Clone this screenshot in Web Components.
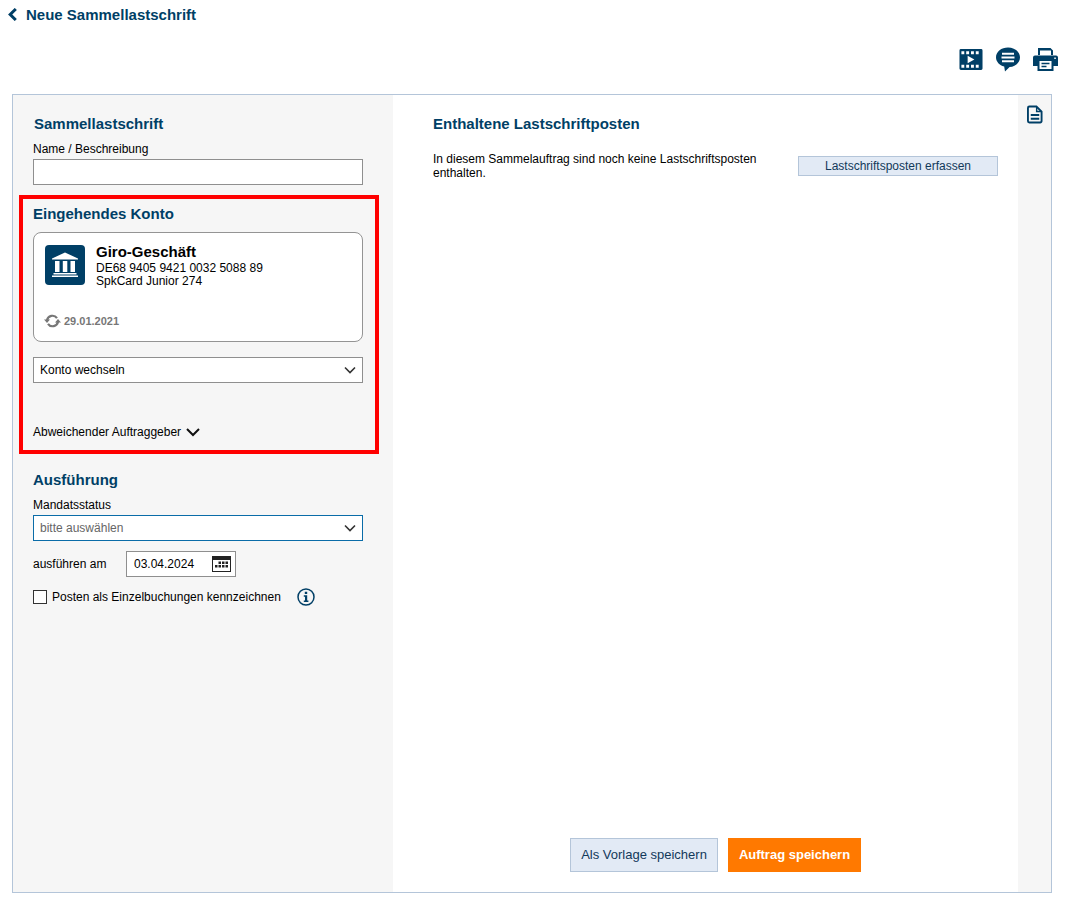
<!DOCTYPE html>
<html lang="de">
<head>
<meta charset="utf-8">
<title>Neue Sammellastschrift</title>
<style>
  html, body { margin: 0; height: 100%; background: #fff; }
  body { font: 12px/14px "Liberation Sans", Arial, sans-serif; color: #000; }
</style>
</head>
<body>
<page-head>Neue Sammellastschrift</page-head>
<tool-bar></tool-bar>
<order-panel>
  <debit-form slot="side"></debit-form>
  <debit-items slot="main"></debit-items>
</order-panel>

<script>
const NAVY = "#003f66";

// back link on top of the page
class PageHead extends HTMLElement {
  constructor() {
    super();
    this.attachShadow({ mode: "open" });
    this.shadowRoot.innerHTML = `
      <style>
        :host { display: flex; align-items: center; height: 30px; padding-left: 8px; color: ${NAVY}; font-size: 15px; font-weight: bold; }
        svg { width: 9px; height: 13px; margin-right: 9px; margin-top: -2px; }
      </style>
      <svg viewBox="0 0 9 13"><path d="M7.800 1 2.200 6.500l5.600 5.500" fill="none" stroke="${NAVY}" stroke-width="3"/></svg>
      <slot></slot>`;
  }
}

class ToolBar extends HTMLElement {
  constructor() {
    super();
    this.attachShadow({ mode: "open" });
    this.shadowRoot.innerHTML = `
      <style>
        :host { display: flex; justify-content: flex-end; align-items: flex-start; gap: 13px; height: 64px; padding: 17px 7px 0 0; box-sizing: border-box; }
        svg { display: block; height: 25px; }
      </style>
      <svg width="24" viewBox="0 0 25 25">
        <path fill="${NAVY}" fill-rule="evenodd" d="M2 1.500h21a1.500 1.500 0 0 1 1.500 1.500v19a1.500 1.500 0 0 1-1.500 1.500H2A1.500 1.500 0 0 1 .5 22V3A1.500 1.500 0 0 1 2 1.500ZM2.500 4v3h3V4Zm5 0v3h3V4Zm5 0v3h3V4Zm5 0v3h3V4ZM2.500 18v3h3v-3Zm5 0v3h3v-3Zm5 0v3h3v-3Zm5 0v3h3v-3ZM9 8.500v8l7-4Z"/>
      </svg>
      <svg width="24" viewBox="0 0 24 25">
        <path fill="${NAVY}" d="M12 .5C5.500.5 0 4.700 0 10.300c0 4.600 3.500 8 8.200 9.300l.8 4.900 4.600-4.500C19.500 19.600 24 15.600 24 10.300 24 4.700 18.500.5 12 .5Z"/>
        <path stroke="#fff" stroke-width="2" d="M6 6.800h12M5.500 10.500h13M6 14.200h12"/>
      </svg>
      <svg width="25" viewBox="0 0 25 25">
        <path fill="${NAVY}" d="M5 1h12.500L20 3.500V8h-2V3.500H7V8H5Z"/>
        <path fill="${NAVY}" d="M2 8.500h21a2 2 0 0 1 2 2V19h-4.500v5h-16v-5H0v-8.500a2 2 0 0 1 2-2Z"/>
        <path fill="#fff" d="M6.500 14h12v8h-12zM21.300 10.500h1.500V12h-1.500z"/>
        <path stroke="${NAVY}" stroke-width="1.400" d="M8.500 16.500h8M8.500 19.500h5"/>
      </svg>`;
  }
}

// the big bordered box: grey form column, white content, grey rail
class OrderPanel extends HTMLElement {
  constructor() {
    super();
    this.attachShadow({ mode: "open" });
    this.shadowRoot.innerHTML = `
      <style>
        :host { display: grid; grid-template-columns: 380px 625px 33px; width: 1040px; height: 799px; margin-left: 12px; box-sizing: border-box; border: 1px solid #b4c5d9; }
        .side, .rail { background: #f6f6f6; }
        .rail { padding: 10px 0 0 9px; }
        .main { display: flex; min-width: 0; }
        svg { display: block; width: 16px; height: 19px; }
      </style>
      <div class="side"><slot name="side"></slot></div>
      <div class="main"><slot name="main"></slot></div>
      <div class="rail">
        <svg viewBox="0 0 17 19">
          <path fill="none" stroke="${NAVY}" stroke-width="2" d="M2.500 1h7.500l5.500 5.500V16.500a1.500 1.500 0 0 1-1.500 1.500h-11.500a1.500 1.500 0 0 1-1.500-1.500V2.500a1.500 1.500 0 0 1 1.500-1.500Z"/>
          <path fill="${NAVY}" d="M9.500 1.500h1.500v4h4.500v1.500h-6ZM4 9h9v2H4ZM4 13h9v2H4Z"/>
        </svg>
      </div>`;
  }
}

class SectionTitle extends HTMLElement {
  constructor() {
    super();
    this.attachShadow({ mode: "open" });
    this.shadowRoot.innerHTML = `
      <style>
        :host { display: block; color: ${NAVY}; font-size: 15px; line-height: 18px; font-weight: bold; }
      </style>
      <slot></slot>`;
  }
}

// fake select, "active" gets the blue border
class SelectBox extends HTMLElement {
  constructor() {
    super();
    this.attachShadow({ mode: "open" });
    this.shadowRoot.innerHTML = `
      <style>
        :host { display: flex; align-items: center; justify-content: space-between; height: 26px; box-sizing: border-box; padding: 0 6px 0 6px; background: #fff; border: 1px solid #8f8f8f; }
        :host([active]) { border-color: #0a6ca8; color: #666; }
        svg { width: 12px; height: 8px; }
      </style>
      <slot></slot>
      <svg viewBox="0 0 12 8"><path d="M1 1.500 6 6.500l5-5" fill="none" stroke="#333" stroke-width="1.600"/></svg>`;
  }
}

class AccountCard extends HTMLElement {
  constructor() {
    super();
    this.attachShadow({ mode: "open" });
    this.shadowRoot.innerHTML = `
      <style>
        :host { display: flex; flex-direction: column; justify-content: space-between; height: 110px; box-sizing: border-box; padding: 12px 11px 13px; background: #fff; border: 1px solid #949494; border-radius: 8px; }
        .top { display: flex; gap: 11px; }
        .logo { display: block; width: 40px; height: 40px; }
        .name { font-size: 15px; line-height: 16px; font-weight: bold; margin: -1px 0 2px; }
        .meta { line-height: 13px; }
        .sync { display: flex; align-items: center; gap: 3px; color: #777; font-size: 11px; font-weight: bold; }
        .sync svg { width: 17px; height: 14px; margin-left: -1px; }
      </style>
      <div class="top">
        <svg class="logo" viewBox="0 0 40 40">
          <rect width="40" height="40" rx="4" fill="${NAVY}"/>
          <path fill="#fff" d="M20 7.500 33 13.500v1H7v-1ZM10 16h4.500v11H10ZM17.800 16h4.500v11h-4.500ZM25.500 16H30v11h-4.500ZM8.500 28h23v1.500h-23ZM7 30.500h26V32H7Z"/>
        </svg>
        <div>
          <div class="name">Giro-Geschäft</div>
          <div class="meta">DE68 9405 9421 0032 5088 89</div>
          <div class="meta">SpkCard Junior 274</div>
        </div>
      </div>
      <div class="sync">
        <svg viewBox="0 0 17 14">
          <path fill="none" stroke="#777" stroke-width="2.200" d="M3 6.500A5.500 5.500 0 0 1 13 4.200M14 7.500A5.500 5.500 0 0 1 4 9.800"/>
          <path fill="#777" d="M0 5.500h6L3 9ZM11 8.500h6L14 5Z"/>
        </svg>
        <span>29.01.2021</span>
      </div>`;
  }
}

class DebitForm extends HTMLElement {
  constructor() {
    super();
    this.attachShadow({ mode: "open" });
    this.shadowRoot.innerHTML = `
      <style>
        :host { display: block; padding: 20px 14px 0 6px; }
        .first { padding: 0 16px 0 14px; }
        .first section-title { padding-left: 1px; }
        .lbl { margin-top: 9px; }
        .inp { height: 26px; margin-top: 3px; box-sizing: border-box; background: #fff; border: 1px solid #8f8f8f; }
        .hl { height: 259px; margin-top: 10px; box-sizing: border-box; padding: 6px 12px 0 10px; border: 4px solid #f00; }
        account-card { margin-top: 9px; }
        .change { margin-top: 15px; }
        .other { display: flex; align-items: center; gap: 5px; margin-top: 42px; }
        .other svg { width: 14px; height: 9px; }
        .exec { padding: 17px 16px 0 14px; }
        .exec .lbl { margin-top: 9px; }
        .exec select-box { margin-top: 3px; }
        .date { display: flex; align-items: center; margin-top: 10px; }
        .date label { width: 93px; }
        .field { display: flex; align-items: center; justify-content: space-between; width: 110px; height: 26px; box-sizing: border-box; padding: 0 4px 0 7px; background: #fff; border: 1px solid #8f8f8f; }
        .field svg { width: 19px; height: 16px; }
        .check { display: flex; align-items: center; margin-top: 11px; }
        .box { width: 14px; height: 14px; box-sizing: border-box; background: #fff; border: 1px solid #333; margin-right: 5px; }
        .info { width: 18px; height: 18px; margin-left: 16px; }
      </style>
      <div class="first">
        <section-title>Sammellastschrift</section-title>
        <div class="lbl">Name / Beschreibung</div>
        <div class="inp"></div>
      </div>
      <div class="hl">
        <section-title>Eingehendes Konto</section-title>
        <account-card></account-card>
        <select-box class="change">Konto wechseln</select-box>
        <div class="other">
          <span>Abweichender Auftraggeber</span>
          <svg viewBox="0 0 14 9"><path d="M1 1l6 6 6-6" fill="none" stroke="#111" stroke-width="2"/></svg>
        </div>
      </div>
      <div class="exec">
        <section-title>Ausführung</section-title>
        <div class="lbl">Mandatsstatus</div>
        <select-box active>bitte auswählen</select-box>
        <div class="date">
          <label>ausführen am</label>
          <div class="field">
            <span>03.04.2024</span>
            <svg viewBox="0 0 19 16">
              <path fill="#222" fill-rule="evenodd" d="M0 0h19v16H0ZM1 4v11h17V4Z"/>
              <path fill="#222" d="M6.500 5.500H9V8H6.500ZM10 5.500h2.500V8H10ZM13.500 5.500H16V8h-2.500ZM3 9h2.500v2.500H3ZM6.500 9H9v2.500H6.500ZM10 9h2.500v2.500H10ZM13.500 9H16v2.500h-2.500Z"/>
            </svg>
          </div>
        </div>
        <div class="check">
          <span class="box"></span>
          <span>Posten als Einzelbuchungen kennzeichnen</span>
          <svg class="info" viewBox="0 0 18 18">
            <circle cx="9" cy="9" r="8" fill="none" stroke="${NAVY}" stroke-width="1.500"/>
            <path fill="${NAVY}" d="M7.800 3.800h2.400v2.200H7.800ZM6.800 7.200h3.400v5.300h1.200v1.500H6.800v-1.500H8V8.700H6.800Z"/>
          </svg>
        </div>
      </div>`;
  }
}

class FlatButton extends HTMLElement {
  constructor() {
    super();
    this.attachShadow({ mode: "open" });
    this.shadowRoot.innerHTML = `
      <style>
        :host { display: inline-flex; align-items: center; justify-content: center; box-sizing: border-box; background: #e2eaf5; border: 1px solid #b4c5d9; color: #12395a; }
        :host([primary]) { background: #ff7900; border-color: #ff7900; color: #fff; font-weight: bold; }
      </style>
      <slot></slot>`;
  }
}

class DebitItems extends HTMLElement {
  constructor() {
    super();
    this.attachShadow({ mode: "open" });
    this.shadowRoot.innerHTML = `
      <style>
        :host { display: flex; flex-direction: column; width: 100%; height: 797px; box-sizing: border-box; padding: 20px 0 20px 40px; }
        .row { display: flex; align-items: flex-start; margin-top: 19px; }
        p { width: 365px; margin: 0; }
        .add { width: 200px; height: 20px; margin-top: 4px; }
        .foot { display: flex; gap: 10px; margin-top: auto; padding-left: 137px; }
        .foot flat-button { height: 34px; font-size: 13px; }
        .save { width: 148px; }
        .send { width: 133px; }
      </style>
      <section-title>Enthaltene Lastschriftposten</section-title>
      <div class="row">
        <p>In diesem Sammelauftrag sind noch keine Lastschriftsposten enthalten.</p>
        <flat-button class="add">Lastschriftsposten erfassen</flat-button>
      </div>
      <div class="foot">
        <flat-button class="save">Als Vorlage speichern</flat-button>
        <flat-button class="send" primary>Auftrag speichern</flat-button>
      </div>`;
  }
}

customElements.define("page-head", PageHead);
customElements.define("tool-bar", ToolBar);
customElements.define("order-panel", OrderPanel);
customElements.define("section-title", SectionTitle);
customElements.define("select-box", SelectBox);
customElements.define("account-card", AccountCard);
customElements.define("debit-form", DebitForm);
customElements.define("flat-button", FlatButton);
customElements.define("debit-items", DebitItems);
</script>
</body>
</html>
